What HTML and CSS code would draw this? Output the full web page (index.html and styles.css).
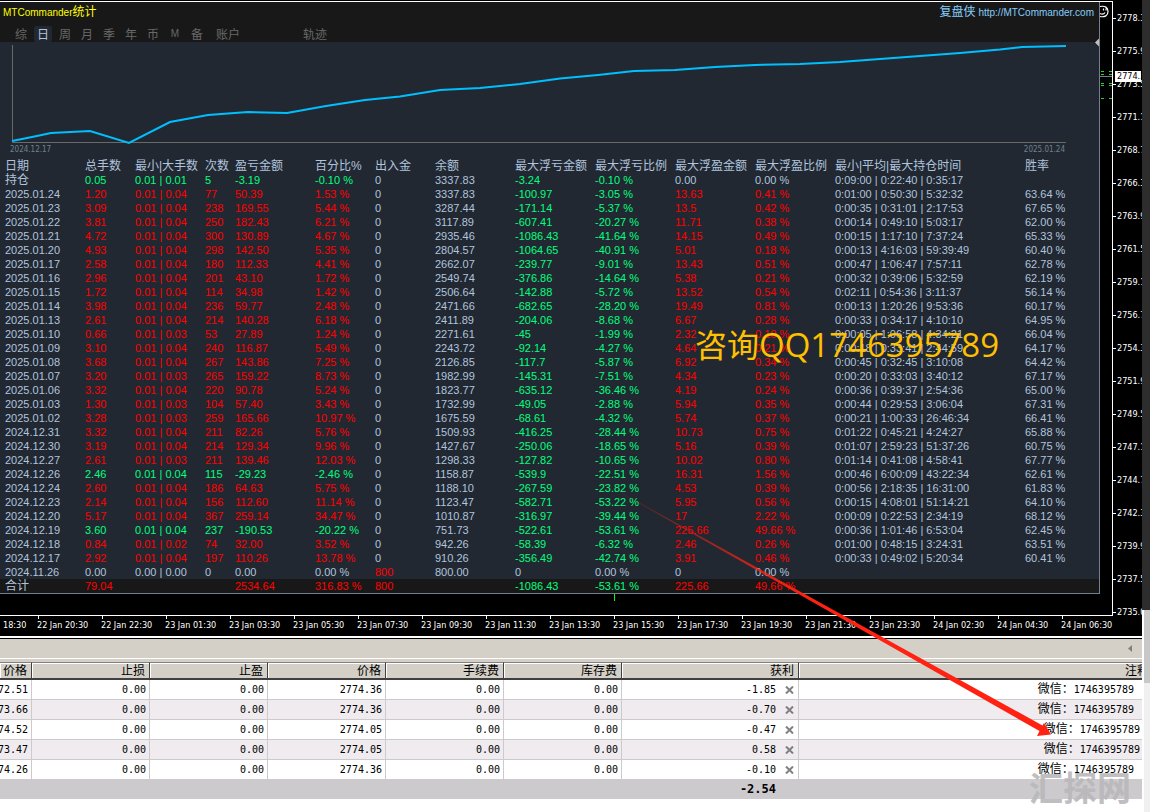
FILE: index.html
```html
<!DOCTYPE html>
<html lang="zh-CN">
<head>
<meta charset="utf-8">
<title>MTCommander统计</title>
<link rel="stylesheet" href="styles.css">
</head>
<body>
<div class="screen">
  <main class="workspace">
    <section class="chart">
      <div class="plot">
        <div class="panel">
          <header class="panel-head">
            <div class="title-row">
              <h1 class="title">MTCommander<span class="cjk">统计</span></h1>
              <a class="site" href="#"><span class="cjk">复盘侠</span> http://MTCommander.com</a>
            </div>
            <nav class="tabs">
              <button type="button">综</button>
              <button type="button" class="active">日</button>
              <button type="button">周</button>
              <button type="button">月</button>
              <button type="button">季</button>
              <button type="button">年</button>
              <button type="button">币</button>
              <button type="button" class="latin">M</button>
              <button type="button">备</button>
              <button type="button" class="wide">账户</button>
              <button type="button" class="wide track">轨迹</button>
            </nav>
          </header>
          <div class="curve">
            <svg viewBox="0 0 1099 103" preserveAspectRatio="none" aria-hidden="true">
              <path class="axis" d="M12.5 3V100.5H1066"/>
              <polyline class="equity" points="12,99 32,95 51,91 90,89 129,101 170,80 208,73 248,70 287,71 326,64 365,58 400,54.5 440,48 480,46 520,42 560,36.5 598,33 634,29 675,28 715,25 755,23 800,22 840,20 880,17 920,14 960,11 1000,7.5 1022,5 1066,4"/>
            </svg>
            <div class="range"><span>2024.12.17</span><span>2025.01.24</span></div>
          </div>
          <table class="stats">
            <colgroup>
              <col class="w80"><col class="w50"><col class="w70"><col class="w30"><col class="w80"><col class="w60"><col class="w60"><col class="w80"><col class="w80"><col class="w80"><col class="w80"><col class="w80"><col class="w190"><col>
            </colgroup>
            <thead>
              <tr><th>日期</th><th>总手数</th><th>最小|大手数</th><th>次数</th><th>盈亏金额</th><th>百分比%</th><th>出入金</th><th>余额</th><th>最大浮亏金额</th><th>最大浮亏比例</th><th>最大浮盈金额</th><th>最大浮盈比例</th><th>最小|平均|最大持仓时间</th><th>胜率</th></tr>
            </thead>
            <tbody id="days"></tbody>
            <tfoot>
              <tr><th>合计</th><td class="up">79.04</td><td></td><td></td><td class="up">2534.64</td><td class="up">316.83 %</td><td class="up">800</td><td></td><td class="down">-1086.43</td><td class="down">-53.61 %</td><td class="up">225.66</td><td class="up">49.66 %</td><td></td><td></td></tr>
            </tfoot>
          </table>
        </div>
        <svg class="margin-marks" width="17" height="110" viewBox="0 0 17 110" aria-hidden="true">
          <path fill="#c0c0c0" d="M4 36.500v8l-4-4z"/>
          <path fill="none" stroke="#fff" stroke-width="1.200" d="M5 4.500c5-1 8 1 8 5s-3 6-8 5M8.500 6.500v2M11 6.500v2M5 11.500c2 1 4 .500 5-1"/>
          <path stroke="#708090" d="M4 74.500h13"/>
          <path stroke="#32cd32" d="M6 69.500h3M14 69.500h3M6 72.500h3M14 72.500h3M6 81.500h3M14 81.500h3M6 83.500h3M14 83.500h3M6 96.500h3M14 96.500h3"/>
        </svg>
        <i class="volume"></i>
      </div>
      <ol class="times">
        <li>18:30</li><li>22 Jan 20:30</li><li>22 Jan 22:30</li><li>23 Jan 01:30</li><li>23 Jan 03:30</li><li>23 Jan 05:30</li><li>23 Jan 07:30</li><li>23 Jan 09:30</li><li>23 Jan 11:30</li><li>23 Jan 13:30</li><li>23 Jan 15:30</li><li>23 Jan 17:30</li><li>23 Jan 19:30</li><li>23 Jan 21:30</li><li>23 Jan 23:30</li><li>24 Jan 02:30</li><li>24 Jan 04:30</li><li>24 Jan 06:30</li>
      </ol>
      <div class="prices">
        <ol>
          <li>2778.3</li><li>2775.9</li><li>2773.5</li><li>2771.1</li><li>2768.7</li><li>2766.3</li><li>2763.9</li><li>2761.5</li><li>2759.1</li><li>2756.7</li><li>2754.3</li><li>2751.9</li><li>2749.5</li><li>2747.1</li><li>2744.7</li><li>2742.3</li><li>2739.9</li><li>2737.5</li><li>2735.0</li>
        </ol>
        <span class="quote">2774.3</span>
      </div>
    </section>

    <section class="terminal">
      <div class="toolbar">
        <svg width="4" height="7" viewBox="0 0 4 7" aria-hidden="true"><path fill="#808080" d="M4 0v7L0 3.500z"/></svg>
      </div>
      <table class="orders">
        <colgroup><col class="w32"><col class="w118"><col class="w118"><col class="w118"><col class="w118"><col class="w118"><col class="w177"><col></colgroup>
        <thead>
          <tr><th>价格</th><th>止损</th><th>止盈</th><th>价格</th><th>手续费</th><th>库存费</th><th>获利</th><th class="note-head">注释</th></tr>
        </thead>
        <tbody id="orders"></tbody>
        <tfoot>
          <tr><td colspan="7"><span class="sum">-2.54</span></td><td></td></tr>
        </tfoot>
      </table>
    </section>
  </main>
  <aside class="scroll"><div class="scroll-dark"></div><div class="scroll-light"><div class="thumb"></div></div></aside>

  <div class="contact"><span class="contact-cjk">咨询</span>QQ1746395789</div>
  <div class="brand">汇探网</div>
  <svg class="arrow" width="470" height="270" viewBox="0 0 470 270" aria-hidden="true">
    <defs>
      <linearGradient id="fade" gradientUnits="userSpaceOnUse" x1="0" y1="0" x2="220" y2="124">
        <stop offset="0" stop-color="#ff2212" stop-opacity="0"/>
        <stop offset="1" stop-color="#ff2212"/>
      </linearGradient>
    </defs>
    <path fill="url(#fade)" d="M0 0L458.500 253.500L460 251L467 262.500L453 264L455.500 259Z"/>
  </svg>
</div>
<script src="script.js"></script>
</body>
</html>
```

FILE: styles.css
```css
* {
  box-sizing: border-box;
}

body {
  margin: 0;
  background: #fff;
  font-family: "Liberation Sans", "Noto Sans CJK SC", sans-serif;
  font-size: 11px;
}

ol {
  margin: 0;
  padding: 0;
  list-style: none;
}

table {
  width: 100%;
  border-collapse: separate;
  border-spacing: 0;
  table-layout: fixed;
}

th {
  font-weight: 400;
}

.screen {
  position: relative;
  display: flex;
  min-height: 100vh;
  overflow: hidden;
}

.workspace {
  flex: 1;
  min-width: 0;
}

.cjk {
  font-size: 12px;
}

/* chart window */
.chart {
  display: grid;
  grid-template-columns: minmax(0, 1fr) 29px;
  background: #000;
}

.plot {
  position: relative;
  margin-top: 1px;
  padding: 0 12px 21px 0;
  border: solid #fff;
  border-width: 1px 1px 1px 0;
}

.panel {
  border: solid #708090;
  border-width: 0 1px 1px 0;
  background: #222831;
  color: #b0c4de;
}

.panel-head {
  display: flex;
  flex-direction: column;
  gap: 3px;
  height: 40px;
  background: #181818;
}

.title-row {
  display: flex;
  justify-content: space-between;
  padding: 0 5px 0 3px;
  line-height: 20px;
}

.title {
  margin: 0;
  color: #ff0;
  font-size: 10px;
  font-weight: 400;
}

.site {
  color: #87cefa;
  font-size: 10px;
  text-decoration: none;
}

.tabs {
  display: flex;
  gap: 4px;
  padding-left: 12px;
}

.tabs button {
  width: 18px;
  height: 16px;
  padding: 0;
  border: 0;
  border-radius: 2px;
  background: none;
  color: #696969;
  font: 12px/16px "Noto Sans CJK SC", sans-serif;
}

.tabs .active {
  background: #222831;
  color: #b0c4de;
}

.tabs .latin {
  font: 10px/16px "Liberation Sans", sans-serif;
}

.tabs .wide {
  width: 28px;
  margin-left: 4px;
}

.tabs .track {
  margin-left: 55px;
}

.curve {
  padding-bottom: 5px;
}

.curve svg {
  display: block;
  width: 100%;
  height: 103px;
}

.axis {
  fill: none;
  stroke: #696969;
}

.equity {
  fill: none;
  stroke: #00bfff;
  stroke-width: 2;
}

.range {
  display: flex;
  justify-content: space-between;
  padding: 0 34px 0 10px;
  color: #708090;
  font: 8px/9px "DejaVu Sans Condensed", sans-serif;
}

.w30 { width: 30px; }
.w32 { width: 32px; }
.w50 { width: 50px; }
.w60 { width: 60px; }
.w70 { width: 70px; }
.w80 { width: 80px; }
.w118 { width: 118px; }
.w177 { width: 177px; }
.w190 { width: 190px; }

.stats th,
.stats td {
  height: 14px;
  padding: 0 0 0 5px;
  line-height: 14px;
  text-align: left;
  white-space: nowrap;
}

.stats th {
  font-size: 12px;
}

.stats .date {
  font-size: 11px;
}

.stats thead th,
.stats tfoot th,
.stats tfoot td {
  padding-top: 1px;
  line-height: 13px;
}

.stats tfoot {
  background: #181818;
}

.up {
  color: #f00;
}

.down {
  color: #00ff7f;
}

.margin-marks {
  position: absolute;
  top: 0;
  right: 0;
}

.volume {
  position: absolute;
  bottom: 14px;
  left: 614px;
  width: 1px;
  height: 7px;
  background: #0f0;
}

.times {
  display: flex;
  grid-row: 2;
  height: 20px;
  color: #fff;
  font: 9px/18px "DejaVu Sans Condensed", sans-serif;
}

.times li {
  position: relative;
  flex: none;
  width: 64px;
  white-space: nowrap;
}

.times li:first-child {
  width: 37px;
  padding-left: 3px;
}

.times li + li::before {
  position: absolute;
  top: 0;
  left: 1px;
  width: 1px;
  height: 3px;
  background: #fff;
  content: "";
}

.prices {
  position: relative;
  grid-row: 1 / 3;
  grid-column: 2;
  padding-top: 2px;
  overflow: hidden;
  color: #fff;
  font: 9px/33px "DejaVu Sans Condensed", sans-serif;
}

.prices li {
  display: flex;
  align-items: center;
  gap: 1px;
  height: 33px;
}

.prices li::before {
  flex: none;
  width: 3px;
  height: 1px;
  background: #fff;
  content: "";
}

.quote {
  position: absolute;
  top: 71px;
  left: 2px;
  width: 26px;
  padding-left: 2px;
  overflow: hidden;
  background: #fff;
  color: #000;
  line-height: 11px;
}

/* order terminal */
.toolbar {
  display: flex;
  align-items: center;
  justify-content: flex-end;
  height: 23px;
  padding-right: 10px;
  border-top: 2px solid #fff;
  border-bottom: 1px solid #fff;
  background: linear-gradient(#000 1px, #d4d0c8 1px);
}

.orders {
  border-top: 3px solid #d4d0c8;
  background: #fff;
  color: #000;
  font: 10px/18px "DejaVu Sans Mono", "Noto Sans CJK SC", monospace;
}

.orders thead th {
  height: 18px;
  padding: 1px 4px 0 0;
  border: solid #808080;
  border-width: 1px 1px 2px 0;
  border-right-color: #404040;
  border-bottom-color: #404040;
  background: #d4d0c8;
  box-shadow: inset 1px 1px #fff;
  font-size: 12px;
  line-height: 14px;
  text-align: right;
  white-space: nowrap;
}

.orders thead .note-head {
  padding-left: 326px;
  border-right: 0;
  overflow: hidden;
  text-align: left;
}

.orders tbody td {
  height: 20px;
  padding: 0 3px 0 0;
  border: solid #cccacd;
  border-width: 0 1px 1px 0;
  text-align: right;
  white-space: nowrap;
}

.orders tbody tr:nth-child(even) {
  background: #efebef;
}

.orders tbody td:last-child {
  padding-right: 8px;
  border-right: 0;
}

.orders tbody .shift td:last-child {
  padding-right: 2px;
}

.clip {
  display: flex;
  justify-content: flex-end;
  overflow: hidden;
}

.profit {
  display: flex;
  align-items: center;
  justify-content: flex-end;
  gap: 9px;
  padding-right: 1px;
}

.close {
  display: flex;
  padding: 0;
  border: 0;
  background: none;
}

.orders tfoot td {
  height: 19px;
  padding: 0;
  background: #cccacd;
  text-align: right;
}

.sum {
  padding-right: 23px;
  font-size: 12px;
  font-weight: 700;
}

/* window edge */
.scroll {
  display: flex;
  flex-direction: column;
  flex: none;
  width: 8px;
}

.scroll-dark {
  height: 610px;
  background: #2d2d2d;
}

.scroll-light {
  flex: 1;
  border-left: 2px solid #fff;
  background: #f0f0f0;
}

.thumb {
  height: 73px;
  background: #c8c8c8;
}

/* annotations lying over the windows */
.contact {
  position: absolute;
  top: 323px;
  left: 695px;
  color: #ffc000;
  font: 33px/44px "Open Sans", "Noto Sans CJK SC", sans-serif;
  white-space: nowrap;
}

.contact-cjk {
  font-size: 32px;
}

.brand {
  position: absolute;
  right: 19px;
  bottom: 5px;
  color: #b9b8bb;
  font: 700 34px/40px "Noto Sans CJK SC", sans-serif;
  opacity: 0.9;
}

.arrow {
  position: absolute;
  top: 472px;
  left: 584px;
}
```

FILE: script.js
```js
// date; lots; min | max lots; trades; profit; percent; deposit; balance; max loss; loss %; max gain; gain %; holding times; win rate
const days = `
持仓;0.05;0.01 | 0.01;5;-3.19;-0.10 %;0;3337.83;-3.24;-0.10 %;0.00;0.00 %;0:09:00 | 0:22:40 | 0:35:17;
2025.01.24;1.20;0.01 | 0.04;77;50.39;1.53 %;0;3337.83;-100.97;-3.05 %;13.63;0.41 %;0:01:00 | 0:50:30 | 5:32:32;63.64 %
2025.01.23;3.09;0.01 | 0.04;238;169.55;5.44 %;0;3287.44;-171.14;-5.37 %;13.5;0.42 %;0:00:35 | 0:31:01 | 2:17:53;67.65 %
2025.01.22;3.81;0.01 | 0.04;250;182.43;6.21 %;0;3117.89;-607.41;-20.27 %;11.71;0.38 %;0:00:14 | 0:49:10 | 5:03:17;62.00 %
2025.01.21;4.72;0.01 | 0.04;300;130.89;4.67 %;0;2935.46;-1086.43;-41.64 %;14.15;0.49 %;0:00:15 | 1:17:10 | 7:37:24;65.33 %
2025.01.20;4.93;0.01 | 0.04;298;142.50;5.35 %;0;2804.57;-1064.65;-40.91 %;5.01;0.18 %;0:00:13 | 4:16:03 | 59:39:49;60.40 %
2025.01.17;2.58;0.01 | 0.04;180;112.33;4.41 %;0;2662.07;-239.77;-9.01 %;13.43;0.51 %;0:00:47 | 1:06:47 | 7:57:11;62.78 %
2025.01.16;2.96;0.01 | 0.04;201;43.10;1.72 %;0;2549.74;-376.86;-14.64 %;5.38;0.21 %;0:00:32 | 0:39:06 | 5:32:59;62.19 %
2025.01.15;1.72;0.01 | 0.04;114;34.98;1.42 %;0;2506.64;-142.88;-5.72 %;13.52;0.54 %;0:02:11 | 0:54:36 | 3:11:37;56.14 %
2025.01.14;3.98;0.01 | 0.04;236;59.77;2.48 %;0;2471.66;-682.65;-28.20 %;19.49;0.81 %;0:00:13 | 1:20:26 | 9:53:36;60.17 %
2025.01.13;2.61;0.01 | 0.04;214;140.28;6.18 %;0;2411.89;-204.06;-8.68 %;6.67;0.28 %;0:00:33 | 0:34:17 | 4:10:10;64.95 %
2025.01.10;0.66;0.01 | 0.03;53;27.89;1.24 %;0;2271.61;-45;-1.99 %;2.32;0.10 %;0:00:05 | 1:06:58 | 4:34:21;66.04 %
2025.01.09;3.10;0.01 | 0.04;240;116.87;5.49 %;0;2243.72;-92.14;-4.27 %;4.64;0.21 %;0:00:18 | 0:33:41 | 2:44:59;64.17 %
2025.01.08;3.68;0.01 | 0.04;267;143.86;7.25 %;0;2126.85;-117.7;-5.87 %;6.92;0.34 %;0:00:45 | 0:32:45 | 3:10:08;64.42 %
2025.01.07;3.20;0.01 | 0.03;265;159.22;8.73 %;0;1982.99;-145.31;-7.51 %;4.34;0.23 %;0:00:20 | 0:33:03 | 3:40:12;67.17 %
2025.01.06;3.32;0.01 | 0.04;220;90.78;5.24 %;0;1823.77;-635.12;-36.46 %;4.19;0.24 %;0:00:36 | 0:39:37 | 2:54:36;65.00 %
2025.01.03;1.30;0.01 | 0.03;104;57.40;3.43 %;0;1732.99;-49.05;-2.88 %;5.94;0.35 %;0:00:44 | 0:29:53 | 3:06:04;67.31 %
2025.01.02;3.28;0.01 | 0.03;259;165.66;10.97 %;0;1675.59;-68.61;-4.32 %;5.74;0.37 %;0:00:21 | 1:00:33 | 26:46:34;66.41 %
2024.12.31;3.32;0.01 | 0.04;211;82.26;5.76 %;0;1509.93;-416.25;-28.44 %;10.73;0.75 %;0:01:22 | 0:45:21 | 4:24:27;65.88 %
2024.12.30;3.19;0.01 | 0.04;214;129.34;9.96 %;0;1427.67;-250.06;-18.65 %;5.16;0.39 %;0:01:07 | 2:59:23 | 51:37:26;60.75 %
2024.12.27;2.61;0.01 | 0.03;211;139.46;12.03 %;0;1298.33;-127.82;-10.65 %;10.02;0.80 %;0:01:14 | 0:41:08 | 4:58:41;67.77 %
2024.12.26;2.46;0.01 | 0.04;115;-29.23;-2.46 %;0;1158.87;-539.9;-22.51 %;16.31;1.56 %;0:00:46 | 6:00:09 | 43:22:34;62.61 %
2024.12.24;2.60;0.01 | 0.04;186;64.63;5.75 %;0;1188.10;-267.59;-23.82 %;4.53;0.39 %;0:00:56 | 2:18:35 | 16:31:00;61.83 %
2024.12.23;2.14;0.01 | 0.04;156;112.60;11.14 %;0;1123.47;-582.71;-53.22 %;5.95;0.56 %;0:00:15 | 4:08:01 | 51:14:21;64.10 %
2024.12.20;5.17;0.01 | 0.04;367;259.14;34.47 %;0;1010.87;-316.97;-39.44 %;17;2.22 %;0:00:09 | 0:22:53 | 2:34:19;68.12 %
2024.12.19;3.60;0.01 | 0.04;237;-190.53;-20.22 %;0;751.73;-522.61;-53.61 %;225.66;49.66 %;0:00:36 | 1:01:46 | 6:53:04;62.45 %
2024.12.18;0.84;0.01 | 0.02;74;32.00;3.52 %;0;942.26;-58.39;-6.32 %;2.46;0.26 %;0:01:00 | 0:48:15 | 3:24:31;63.51 %
2024.12.17;2.92;0.01 | 0.04;197;110.26;13.78 %;0;910.26;-356.49;-42.74 %;3.91;0.46 %;0:00:33 | 0:49:02 | 5:20:34;60.41 %
2024.11.26;0.00;0.00 | 0.00;0;0.00;0.00 %;800;800.00;0;0.00 %;0;0.00 %;;
`.trim().split('\n').map(line => line.split(';').slice(0, 14));

const tone = value => {
  const n = parseFloat(value);
  return n > 0 ? 'up' : n < 0 ? 'down' : '';
};

// Columns 1-5 follow the day's profit; the other money columns follow their own sign.
const cellTone = (row, i) => {
  if (i >= 1 && i <= 5) return tone(row[4]);
  if (i === 6 || (i >= 8 && i <= 11)) return tone(row[i]);
  return '';
};

document.getElementById('days').innerHTML = days.map(row =>
  '<tr>' + row.map((text, i) => i === 0
    ? `<th${/\d/.test(text) ? ' class="date"' : ''}>${text}</th>`
    : `<td class="${cellTone(row, i)}">${text}</td>`).join('') + '</tr>').join('');

const orders = [
  ['2772.51', '2774.36', '-1.85', false],
  ['2773.66', '2774.36', '-0.70', false],
  ['2774.52', '2774.05', '-0.47', true],
  ['2773.47', '2774.05', '0.58', true],
  ['2774.26', '2774.36', '-0.10', false]
];

const cross = '<svg width="9" height="8" viewBox="0 0 9 8"><path d="M1 .5L8 7.5M8 .5L1 7.5" stroke="#808080" stroke-width="2"/></svg>';

document.getElementById('orders').innerHTML = orders.map(([open, now, profit, shift]) => `
  <tr${shift ? ' class="shift"' : ''}>
    <td><div class="clip">${open}</div></td><td>0.00</td><td>0.00</td><td>${now}</td><td>0.00</td><td>0.00</td>
    <td><div class="profit">${profit}<button type="button" class="close" aria-label="平仓">${cross}</button></div></td>
    <td><span class="cjk">微信：</span>1746395789</td>
  </tr>`).join('');
```
